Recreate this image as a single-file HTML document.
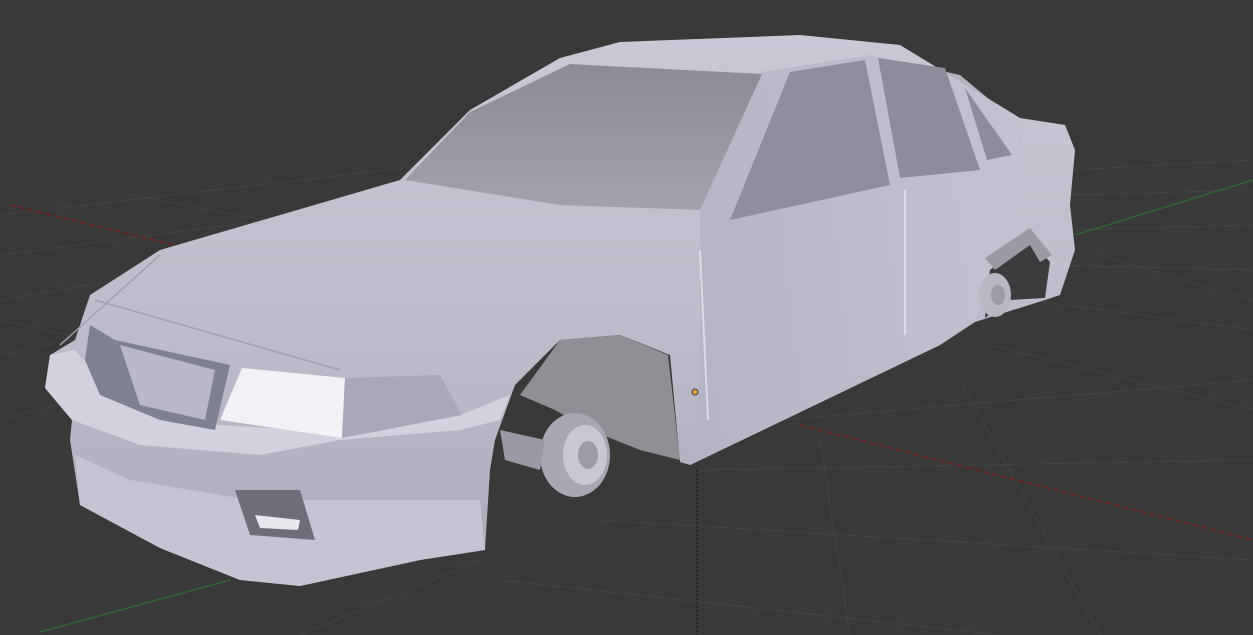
<!DOCTYPE html><html><head><style>html,body{margin:0;padding:0;background:#393939;overflow:hidden}svg{display:block}</style></head><body>
<svg width="1253" height="635" viewBox="0 0 1253 635" xmlns="http://www.w3.org/2000/svg">
<defs>
<linearGradient id="bd" x1="0" y1="0" x2="0" y2="1"><stop offset="0" stop-color="#c9c9d6"/><stop offset="0.6" stop-color="#babac8"/><stop offset="1" stop-color="#a9a9b8"/></linearGradient>
<linearGradient id="sd" x1="0" y1="0" x2="1" y2="0"><stop offset="0" stop-color="#b4b4c4"/><stop offset="1" stop-color="#c2c2d0"/></linearGradient>
<linearGradient id="ws" x1="0" y1="0" x2="0" y2="1"><stop offset="0" stop-color="#8c8c94"/><stop offset="1" stop-color="#a2a2aa"/></linearGradient>
</defs>
<g stroke="#444" stroke-width="1" fill="none">
<path d="M0 215 L560 150"/><path d="M0 255 L500 190"/><path d="M0 300 L420 230"/><path d="M0 355 L300 290"/><path d="M0 420 L130 385"/>
<path d="M130 195 L400 245"/><path d="M60 280 L250 330"/><path d="M0 320 L90 340"/>
<path d="M1070 170 L1253 160"/><path d="M1070 195 L1253 190"/><path d="M1060 230 L1253 225"/><path d="M1050 265 L1253 270"/><path d="M1030 300 L1253 330"/><path d="M990 345 L1253 410"/>
<path d="M780 420 L1253 380"/><path d="M700 470 L1253 460"/><path d="M600 520 L1253 560"/><path d="M500 580 L1000 635"/>
<path d="M1080 250 L1253 300"/><path d="M960 380 L1100 635"/><path d="M820 440 L850 635"/><path d="M480 560 L300 635"/>
</g>
<path d="M10 205 L400 300" stroke="#7a1a1a" stroke-width="1.3" stroke-dasharray="6 3"/>
<path d="M800 425 L1253 540" stroke="#7a1a1a" stroke-width="1.3" stroke-dasharray="6 3"/>
<path d="M40 632 L230 580" stroke="#2e6a2e" stroke-width="1.3"/>
<path d="M1075 235 L1253 180" stroke="#2e6a2e" stroke-width="1.3"/>
<path d="M697 470 L697 635" stroke="#111" stroke-width="1" stroke-dasharray="2 2"/>
<path fill="url(#bd)" d="M90 295 L160 250 L400 180 L470 110 L560 58 L620 42 L800 35 L900 45 L1020 118 L1065 125 L1075 150 L1070 205 L1075 250 L1060 295 L1045 300 L975 322 L940 345 L690 465 L680 462 L670 355 L620 335 L560 340 L515 385 L495 440 L490 470 L485 550 L420 560 L300 586 L240 580 L160 548 L80 505 L70 440 L72 420 L45 388 L50 355 L75 340 Z"/>
<path fill="url(#sd)" d="M700 210 L760 72 L870 55 L960 75 L1020 125 L1025 200 L1000 250 L975 320 L940 345 L690 465 L700 380 Z" opacity="0.9"/>
<path fill="url(#ws)" d="M405 180 L470 112 L570 64 L762 74 L700 210 L560 205 Z"/>
<path fill="#8e8e9c" d="M730 220 L790 72 L865 60 L890 185 Z"/>
<path fill="#8c8c9a" d="M900 178 L878 58 L945 68 L980 170 Z"/>
<path fill="#8c8c9a" d="M987 160 L965 88 L1012 155 Z"/>
<path d="M905 190 L905 335 M700 250 L708 420" stroke="#dcdce6" stroke-width="2" fill="none"/>
<path fill="#8f8f96" d="M560 340 L620 335 L668 355 L680 460 L640 450 L590 430 L555 410 L520 395 Z"/>
<path fill="#3c3c3e" d="M990 270 L1030 240 L1050 262 L1045 298 L1010 300 L985 318 Z"/>
<path fill="#9a9aa2" d="M985 258 L1030 228 L1052 255 L1040 262 L1030 245 L995 270 Z"/>
<ellipse cx="575" cy="455" rx="35" ry="42" fill="#a8a8b4"/><ellipse cx="585" cy="455" rx="22" ry="30" fill="#c8c8d2"/><ellipse cx="588" cy="455" rx="10" ry="14" fill="#9c9ca6"/>
<path d="M500 430 L545 440 L540 470 L505 460 Z" fill="#9a9aa6"/>
<ellipse cx="995" cy="295" rx="16" ry="22" fill="#b8b8c4"/><ellipse cx="998" cy="295" rx="7" ry="10" fill="#9c9ca6"/>
<path fill="#d2d2de" d="M45 388 L72 420 L140 445 L260 455 L340 440 L460 430 L500 420 L510 395 L460 415 L340 432 L220 425 L120 400 L75 350 L50 355 Z"/>
<path fill="#7f8090" d="M90 325 L115 340 L230 365 L215 430 L160 420 L100 395 L85 360 Z"/>
<path fill="#b8b8c6" d="M120 345 L215 370 L205 420 L140 405 Z"/>
<path fill="#f2f2f6" d="M220 420 L242 368 L345 378 L342 438 Z"/>
<path fill="#a8a8b8" d="M345 378 L440 375 L462 415 L342 438 Z"/>
<path fill="#c4c4d2" d="M75 455 L130 480 L250 500 L480 500 L485 550 L420 560 L300 586 L240 580 L160 548 L80 505 Z"/>
<path fill="#6e6e7a" d="M235 490 L300 490 L315 540 L250 535 Z"/>
<path fill="#e8e8ee" d="M255 515 L300 520 L298 530 L260 528 Z"/>
<path d="M60 345 L160 255 M95 300 L340 370" stroke="#a0a0ae" stroke-width="1.5" fill="none"/>
<circle cx="695" cy="392" r="3" fill="#e0a040" stroke="#222" stroke-width="0.8"/>
</svg>
</body></html>
